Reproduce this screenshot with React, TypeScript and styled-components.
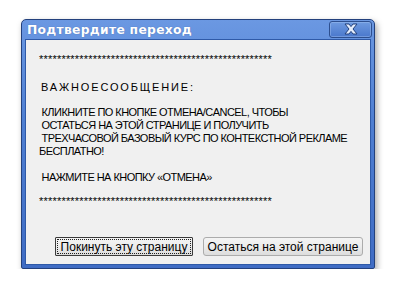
import React from 'react';
import styled, { createGlobalStyle } from 'styled-components';

const GlobalStyle = createGlobalStyle`
    html, body {
        margin: 0;
        padding: 0;
        background: #ffffff;
    }
    body {
        font-family: "Liberation Sans", Arial, sans-serif;
    }
`

const Page = styled.div`
    padding: 19px 0 0 21px;
`

const Window = styled.div`
    width: 354px;
    height: 250px;
    box-sizing: border-box;
    display: flex;
    flex-direction: column;
    background: linear-gradient(180deg, #6b98e2 0%, #4f7fd2 40%, #3f6cc4 100%);
    border: 1px solid #23417d;
    border-radius: 5px 5px 2px 2px;
    box-shadow: 2px 3px 6px rgba(0, 0, 0, 0.35);
`

const TitleBar = styled.div`
    height: 19px;
    display: flex;
    align-items: center;
    justify-content: space-between;
    padding: 0 2px 0 5px;
`

const Title = styled.span`
    font-family: "DejaVu Sans", Verdana, sans-serif;
    font-weight: bold;
    font-size: 12.3px;
    color: #ffffff;
    text-shadow: 0 0 1px rgba(20, 40, 90, 0.4);
    letter-spacing: 0.3px;
`

const CloseButton = styled.div`
    width: 43px;
    height: 17px;
    margin-top: -1px;
    box-sizing: border-box;
    border: 1px solid #2d4f8f;
    border-radius: 3px;
    background: linear-gradient(180deg, #6e9ae0, #4a78cc);
    box-shadow: inset 0 0 0 1px rgba(170, 200, 245, 0.4);
    display: flex;
    align-items: center;
    justify-content: center;
`

const Client = styled.div`
    flex: 1;
    margin: 0 3px 3px 3px;
    background: #f0f0f0;
    border: 1px solid #2f5aa8;
    display: flex;
    flex-direction: column;
    padding: 13px 7px 8px 13px;
`

const Message = styled.div`
    font-family: "Liberation Sans", Tahoma, Arial, sans-serif;
    font-size: 11px;
    line-height: 13px;
    letter-spacing: -0.55px;
    color: #000000;
    white-space: pre;
    flex: 1;
`

const Line = styled.div<{ $gap?: number }>`
    margin-top: ${p => p.$gap ?? 0}px;
`

const Stars = styled(Line)`
    letter-spacing: 0.2px;
`

const Spaced = styled(Line)`
    padding-left: 2px;
    letter-spacing: 1.85px;
`

const Buttons = styled.div`
    display: flex;
    justify-content: flex-end;
    gap: 10px;
`

const Button = styled.button<{ $focused?: boolean; $width: number }>`
    width: ${p => p.$width}px;
    height: 19px;
    padding: 0;
    font-family: "Liberation Sans", Tahoma, sans-serif;
    font-size: 12px;
    color: #000000;
    background: linear-gradient(180deg, #f4f4f4 0%, #ececec 50%, #dcdcdc 100%);
    border: 1px solid ${p => (p.$focused ? '#3a3a3a' : '#acacac')};
    border-radius: ${p => (p.$focused ? '1px' : '3px')};
    outline: ${p => (p.$focused ? '1px dotted #222' : 'none')};
    outline-offset: -3px;
    display: flex;
    align-items: center;
    justify-content: center;
`

const stars = '*'.repeat(52);

export default function App() {
    return (
        <>
            <GlobalStyle />
            <Page>
                <Window>
                    <TitleBar>
                        <Title>Подтвердите переход</Title>
                        <CloseButton>
                            <svg width="16" height="12" viewBox="0 0 16 12">
                                <path
                                    d="M2 1 L6 1 L8 3.6 L10 1 L14 1 L10 6 L14 11 L10 11 L8 8.4 L6 11 L2 11 L6 6 Z"
                                    fill="#e4edfc"
                                    stroke="#22407c"
                                    strokeWidth="1"
                                    strokeLinejoin="round"
                                />
                            </svg>
                        </CloseButton>
                    </TitleBar>
                    <Client>
                        <Message>
                            <Stars>{stars}</Stars>
                            <Spaced $gap={15}>ВАЖНОЕСООБЩЕНИЕ:</Spaced>
                            <Line $gap={12}>{' КЛИКНИТЕ ПО КНОПКЕ ОТМЕНА/CANCEL, ЧТОБЫ'}</Line>
                            <Line>{' ОСТАТЬСЯ НА ЭТОЙ СТРАНИЦЕ И ПОЛУЧИТЬ'}</Line>
                            <Line>{' ТРЕХЧАСОВОЙ БАЗОВЫЙ КУРС ПО КОНТЕКСТНОЙ РЕКЛАМЕ'}</Line>
                            <Line>БЕСПЛАТНО!</Line>
                            <Line $gap={13}>{' НАЖМИТЕ НА КНОПКУ «ОТМЕНА»'}</Line>
                            <Stars $gap={11}>{stars}</Stars>
                        </Message>
                        <Buttons>
                            <Button $focused $width={138}>Покинуть эту страницу</Button>
                            <Button $width={160}>Остаться на этой странице</Button>
                        </Buttons>
                    </Client>
                </Window>
            </Page>
        </>
    );
}
